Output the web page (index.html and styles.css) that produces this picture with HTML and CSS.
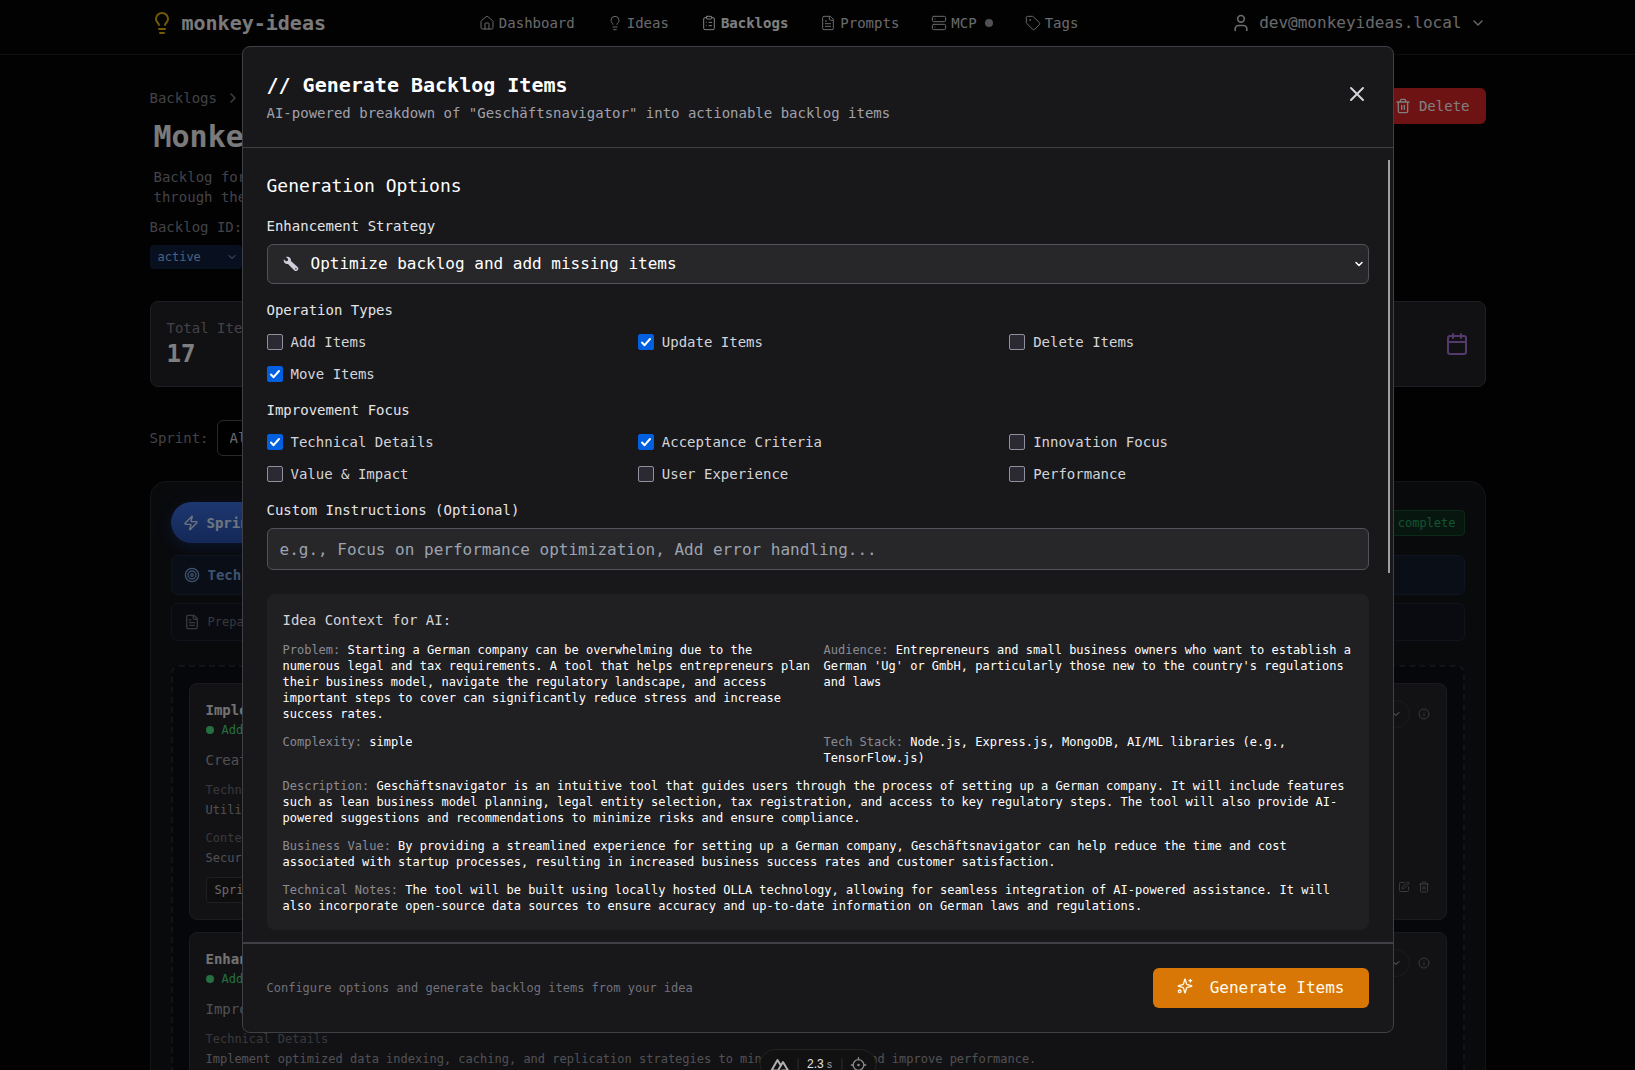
FILE: index.html
```html
<!DOCTYPE html>
<html lang="en">
<head>
    <meta charset="UTF-8">
    <meta name="viewport" content="width=device-width, initial-scale=1.0">
    <title>Backlogs - monkey-ideas</title>
    <link rel="stylesheet" href="styles.css">
</head>
<body>

<!-- icon set -->
<svg class="sprite" aria-hidden="true">
    <symbol id="i-bulb" viewBox="0 0 24 24"><path d="M15 14c.2-1 .7-1.700 1.500-2.500 1-.9 1.500-2.200 1.500-3.500A6 6 0 0 0 6 8c0 1 .2 2.200 1.500 3.500.7.7 1.300 1.500 1.500 2.500M9 18h6M10 22h4"/></symbol>
    <symbol id="i-home" viewBox="0 0 24 24"><path d="M15 21v-8a1 1 0 0 0-1-1h-4a1 1 0 0 0-1 1v8"/><path d="M3 10a2 2 0 0 1 .7-1.500l7-6a2 2 0 0 1 2.600 0l7 6A2 2 0 0 1 21 10v9a2 2 0 0 1-2 2H5a2 2 0 0 1-2-2z"/></symbol>
    <symbol id="i-clipboard" viewBox="0 0 24 24"><rect x="8" y="2" width="8" height="4" rx="1"/><path d="M16 4h2a2 2 0 0 1 2 2v14a2 2 0 0 1-2 2H6a2 2 0 0 1-2-2V6a2 2 0 0 1 2-2h2M12 11h4M12 16h4M8 11h.01M8 16h.01"/></symbol>
    <symbol id="i-file" viewBox="0 0 24 24"><path d="M15 2H6a2 2 0 0 0-2 2v16a2 2 0 0 0 2 2h12a2 2 0 0 0 2-2V7z"/><path d="M14 2v4a2 2 0 0 0 2 2h4M10 9H8M16 13H8M16 17H8"/></symbol>
    <symbol id="i-server" viewBox="0 0 24 24"><rect x="2" y="2" width="20" height="8" rx="2"/><rect x="2" y="14" width="20" height="8" rx="2"/><path d="M6 6h.01M6 18h.01"/></symbol>
    <symbol id="i-tag" viewBox="0 0 24 24"><path d="M12.600 2.600A2 2 0 0 0 11.200 2H4a2 2 0 0 0-2 2v7.200a2 2 0 0 0 .6 1.400l8.700 8.700a2.400 2.400 0 0 0 3.400 0l6.600-6.600a2.400 2.400 0 0 0 0-3.400z"/><circle cx="7.500" cy="7.500" r=".5"/></symbol>
    <symbol id="i-user" viewBox="0 0 24 24"><path d="M19 21v-2a4 4 0 0 0-4-4H9a4 4 0 0 0-4 4v2"/><circle cx="12" cy="7" r="4"/></symbol>
    <symbol id="i-down" viewBox="0 0 24 24"><path d="m6 9 6 6 6-6"/></symbol>
    <symbol id="i-right" viewBox="0 0 24 24"><path d="m9 18 6-6-6-6"/></symbol>
    <symbol id="i-close" viewBox="0 0 24 24"><path d="M18 6 6 18M6 6l12 12"/></symbol>
    <symbol id="i-trash" viewBox="0 0 24 24"><path d="M3 6h18M19 6v14a2 2 0 0 1-2 2H7a2 2 0 0 1-2-2V6M8 6V4a2 2 0 0 1 2-2h4a2 2 0 0 1 2 2v2M10 11v6M14 11v6"/></symbol>
    <symbol id="i-calendar" viewBox="0 0 24 24"><rect x="3" y="4" width="18" height="18" rx="2"/><path d="M8 2v4M16 2v4M3 10h18"/></symbol>
    <symbol id="i-zap" viewBox="0 0 24 24"><path d="M4 14a1 1 0 0 1-.8-1.600l9.900-10.200a.5.5 0 0 1 .9.500l-1.900 6A1 1 0 0 0 13 10h7a1 1 0 0 1 .8 1.600l-9.900 10.200a.5.5 0 0 1-.9-.5l1.900-6A1 1 0 0 0 11 14z"/></symbol>
    <symbol id="i-target" viewBox="0 0 24 24"><circle cx="12" cy="12" r="10"/><circle cx="12" cy="12" r="6"/><circle cx="12" cy="12" r="2"/></symbol>
    <symbol id="i-info" viewBox="0 0 24 24"><circle cx="12" cy="12" r="10"/><path d="M12 16v-4M12 8h.01"/></symbol>
    <symbol id="i-edit" viewBox="0 0 24 24"><path d="M12 3H5a2 2 0 0 0-2 2v14a2 2 0 0 0 2 2h14a2 2 0 0 0 2-2v-7"/><path d="M18.400 2.600a1 1 0 0 1 3 3l-9 9-4 1 1-4z"/></symbol>
    <symbol id="i-sparkles" viewBox="0 0 24 24"><path d="M9.900 15.500A2 2 0 0 0 8.500 14.100l-6.100-1.600a.5.5 0 0 1 0-1L8.500 9.900A2 2 0 0 0 9.900 8.500l1.600-6.100a.5.5 0 0 1 1 0l1.600 6.100a2 2 0 0 0 1.400 1.400l6.100 1.600a.5.5 0 0 1 0 1l-6.100 1.600a2 2 0 0 0-1.400 1.400l-1.600 6.100a.5.5 0 0 1-1 0z"/><path d="M20 2v4M22 4h-4"/><circle cx="4" cy="20" r="2"/></symbol>
</svg>

<header class="topbar">
    <div class="container topbar-inner">
        <a href="#" class="brand"><svg class="icon icon-lg"><use href="#i-bulb"/></svg>monkey-ideas</a>
        <nav class="main-nav">
            <a href="#"><svg class="icon"><use href="#i-home"/></svg>Dashboard</a>
            <a href="#"><svg class="icon"><use href="#i-bulb"/></svg>Ideas</a>
            <a href="#" class="current"><svg class="icon"><use href="#i-clipboard"/></svg>Backlogs</a>
            <a href="#"><svg class="icon"><use href="#i-file"/></svg>Prompts</a>
            <a href="#"><svg class="icon"><use href="#i-server"/></svg>MCP<span class="status-dot"></span></a>
            <a href="#"><svg class="icon"><use href="#i-tag"/></svg>Tags</a>
        </nav>
        <button class="user-menu"><svg class="icon icon-md"><use href="#i-user"/></svg>dev@monkeyideas.local<svg class="icon"><use href="#i-down"/></svg></button>
    </div>
</header>

<main class="container page">
    <div class="page-head">
        <div>
            <div class="breadcrumbs"><a href="#">Backlogs</a><svg class="icon"><use href="#i-right"/></svg></div>
            <h1>Monkey</h1>
            <p class="page-desc">Backlog for<br>through the</p>
            <p class="backlog-id">Backlog ID:</p>
            <div class="status-wrap">
                <select class="status-select" aria-label="Status"><option>active</option></select>
                <svg class="icon icon-sm"><use href="#i-down"/></svg>
            </div>
        </div>
        <button class="delete-btn"><svg class="icon"><use href="#i-trash"/></svg>Delete</button>
    </div>

    <div class="stats">
        <div class="stat-card">
            <div>
                <div class="stat-label">Total Items</div>
                <div class="stat-value">17</div>
            </div>
        </div>
        <div class="stat-card stat-last"><svg class="icon icon-lg calendar"><use href="#i-calendar"/></svg></div>
    </div>

    <div class="filter">
        <label for="sprint-filter">Sprint:</label>
        <select id="sprint-filter"><option>All</option></select>
    </div>

    <section class="sprint">
        <div class="sprint-head">
            <span class="sprint-pill"><svg class="icon"><use href="#i-zap"/></svg>Sprint</span>
            <span class="complete-badge">complete</span>
        </div>
        <div class="sprint-goal"><svg class="icon"><use href="#i-target"/></svg>Tech</div>
        <div class="sprint-note"><svg class="icon"><use href="#i-file"/></svg>Prepare</div>

        <div class="drop-area">
            <article class="item-card">
                <div class="item-head">
                    <div>
                        <h3>Implement</h3>
                        <div class="item-tag">Added</div>
                    </div>
                    <div class="item-tools">
                        <button class="round-btn" aria-label="Expand"><svg class="icon icon-sm"><use href="#i-down"/></svg></button>
                        <svg class="icon icon-sm"><use href="#i-info"/></svg>
                    </div>
                </div>
                <p class="item-text">Create</p>
                <div class="item-section">
                    <h4>Technical Details</h4>
                    <p>Utilize</p>
                </div>
                <div class="item-section">
                    <h4>Context</h4>
                    <p>Security</p>
                </div>
                <div class="item-foot">
                    <select class="item-select" aria-label="Sprint"><option>Sprint</option></select>
                    <div class="item-tools">
                        <button class="plain-btn" aria-label="Edit"><svg class="icon icon-sm"><use href="#i-edit"/></svg></button>
                        <button class="plain-btn" aria-label="Delete"><svg class="icon icon-sm"><use href="#i-trash"/></svg></button>
                    </div>
                </div>
            </article>

            <article class="item-card">
                <div class="item-head">
                    <div>
                        <h3>Enhance</h3>
                        <div class="item-tag">Added</div>
                    </div>
                    <div class="item-tools">
                        <button class="round-btn" aria-label="Expand"><svg class="icon icon-sm"><use href="#i-down"/></svg></button>
                        <svg class="icon icon-sm"><use href="#i-info"/></svg>
                    </div>
                </div>
                <p class="item-text">Improve</p>
                <div class="item-section">
                    <h4>Technical Details</h4>
                    <p>Implement optimized data indexing, caching, and replication strategies to minimize latency and improve performance.</p>
                </div>
            </article>
        </div>
    </section>
</main>

<div class="overlay">
    <div class="modal" role="dialog" aria-labelledby="modal-title">
        <div class="modal-header">
            <div>
                <h2 id="modal-title">// Generate Backlog Items</h2>
                <p>AI-powered breakdown of "Geschäftsnavigator" into actionable backlog items</p>
            </div>
            <button class="close-btn" aria-label="Close"><svg class="icon icon-lg"><use href="#i-close"/></svg></button>
        </div>

        <div class="modal-body">
            <div class="scroll-thumb"></div>
            <h3>Generation Options</h3>

            <div class="field">
                <label class="field-label" for="strategy">Enhancement Strategy</label>
                <div class="select-wrap">
                    <svg class="wrench" viewBox="0 0 16 16"><path d="M.8 3.200 2.900 5.300 4.700 4.900 5.100 3.100 3 1C5.800 0 8.400 2 7.900 4.900l6.700 6.200a2.300 2.300 0 0 1-3.200 3.300L5 7.900C2.400 8.500.1 6.200.8 3.200z"/><circle cx="12.900" cy="12.700" r=".8"/></svg>
                    <select id="strategy"><option>Optimize backlog and add missing items</option></select>
                    <svg class="icon icon-sm select-arrow"><use href="#i-down"/></svg>
                </div>
            </div>

            <fieldset class="field">
                <legend class="field-label">Operation Types</legend>
                <div class="checks">
                    <label><input type="checkbox">Add Items</label>
                    <label><input type="checkbox" checked>Update Items</label>
                    <label><input type="checkbox">Delete Items</label>
                    <label><input type="checkbox" checked>Move Items</label>
                </div>
            </fieldset>

            <fieldset class="field">
                <legend class="field-label">Improvement Focus</legend>
                <div class="checks">
                    <label><input type="checkbox" checked>Technical Details</label>
                    <label><input type="checkbox" checked>Acceptance Criteria</label>
                    <label><input type="checkbox">Innovation Focus</label>
                    <label><input type="checkbox">Value &amp; Impact</label>
                    <label><input type="checkbox">User Experience</label>
                    <label><input type="checkbox">Performance</label>
                </div>
            </fieldset>

            <div class="field">
                <label class="field-label" for="instructions">Custom Instructions (Optional)</label>
                <input type="text" id="instructions" placeholder="e.g., Focus on performance optimization, Add error handling...">
            </div>

            <div class="context">
                <h4>Idea Context for AI:</h4>
                <div class="context-grid">
                    <p><span>Problem:</span> Starting a German company can be overwhelming due to the numerous legal and tax requirements. A tool that helps entrepreneurs plan their business model, navigate the regulatory landscape, and access important steps to cover can significantly reduce stress and increase success rates.</p>
                    <p><span>Audience:</span> Entrepreneurs and small business owners who want to establish a German 'Ug' or GmbH, particularly those new to the country's regulations and laws</p>
                    <p><span>Complexity:</span> simple</p>
                    <p><span>Tech Stack:</span> Node.js, Express.js, MongoDB, AI/ML libraries (e.g., TensorFlow.js)</p>
                    <p class="wide"><span>Description:</span> Geschäftsnavigator is an intuitive tool that guides users through the process of setting up a German company. It will include features such as lean business model planning, legal entity selection, tax registration, and access to key regulatory steps. The tool will also provide AI-powered suggestions and recommendations to minimize risks and ensure compliance.</p>
                    <p class="wide"><span>Business Value:</span> By providing a streamlined experience for setting up a German company, Geschäftsnavigator can help reduce the time and cost associated with startup processes, resulting in increased business success rates and customer satisfaction.</p>
                    <p class="wide"><span>Technical Notes:</span> The tool will be built using locally hosted OLLA technology, allowing for seamless integration of AI-powered assistance. It will also incorporate open-source data sources to ensure accuracy and up-to-date information on German laws and regulations.</p>
                </div>
            </div>
        </div>

        <div class="modal-footer">
            <p>Configure options and generate backlog items from your idea</p>
            <button class="generate-btn"><svg class="icon"><use href="#i-sparkles"/></svg>Generate Items</button>
        </div>
    </div>
</div>

<div class="devtools">
    <svg class="nuxt" viewBox="0 0 20 14"><path d="M10 12.500H2L8 2l3 5M8.500 12.500 13.500 4l5 8.500H12"/></svg>
    <span class="timing">2.3 <small>s</small></span>
    <svg class="icon" viewBox="0 0 24 24"><circle cx="12" cy="12" r="8"/><circle cx="12" cy="12" r="1"/><path d="M12 1v3M12 20v3M1 12h3M20 12h3"/></svg>
</div>

</body>
</html>
```
FILE: styles.css
```css
* {
    box-sizing: border-box;
    margin: 0;
    padding: 0;
}

body {
    font-family: "DejaVu Sans Mono", "Liberation Mono", monospace;
    font-size: 14px;
    line-height: 20px;
    background: #040405;
    color: #fff;
    height: 100vh;
    overflow: hidden;
}

button, select, input {
    font: inherit;
    color: inherit;
}

button {
    background: none;
    border: none;
    cursor: pointer;
}

select {
    appearance: none;
}

a {
    color: inherit;
    text-decoration: none;
}

.sprite {
    display: none;
}

.icon {
    width: 16px;
    height: 16px;
    flex: none;
    fill: none;
    stroke: currentColor;
    stroke-width: 2;
    stroke-linecap: round;
    stroke-linejoin: round;
}

.icon-sm {
    width: 12px;
    height: 12px;
}

.icon-md {
    width: 20px;
    height: 20px;
}

.icon-lg {
    width: 24px;
    height: 24px;
}

.container {
    max-width: 1400px;
    margin: 0 auto;
    padding: 0 32px;
}

/* top bar */
.topbar {
    border-bottom: 1px solid #1c1c1f;
    padding-bottom: 8px;
}

.topbar-inner {
    display: flex;
    justify-content: space-between;
    align-items: center;
    height: 46px;
}

.brand {
    display: flex;
    align-items: center;
    gap: 8px;
    font-size: 20px;
    font-weight: bold;
    color: #f4f4f5;
}

.brand .icon {
    color: #eab308;
}

.main-nav {
    display: flex;
    gap: 32px;
    color: #d4d4d8;
}

.main-nav a {
    display: flex;
    align-items: center;
    gap: 4px;
}

.main-nav .icon {
    stroke-width: 1.5;
}

.main-nav .current {
    color: #fff;
    font-weight: bold;
}

.status-dot {
    width: 8px;
    height: 8px;
    margin-left: 4px;
    border-radius: 50%;
    background: #a1a1aa;
}

.user-menu {
    display: flex;
    align-items: center;
    gap: 8px;
    font-size: 16px;
    color: #d4d4d8;
}

.user-menu .icon {
    stroke-width: 2;
}

/* page */
.page {
    padding-top: 33px;
}

.page-head {
    display: flex;
    justify-content: space-between;
    align-items: flex-start;
    margin-bottom: 32px;
}

.breadcrumbs {
    display: flex;
    align-items: center;
    gap: 8px;
    margin-bottom: 11px;
    color: #85858e;
}

h1 {
    font-size: 30px;
    line-height: 36px;
    padding-left: 4px;
    margin-bottom: 12px;
    color: #f4f4f5;
}

.page-desc {
    padding-left: 4px;
    margin-bottom: 10px;
    color: #85858e;
}

.backlog-id {
    margin-bottom: 8px;
    color: #85858e;
}

.status-wrap {
    position: relative;
    width: 92px;
}

.status-wrap .icon {
    position: absolute;
    right: 4px;
    top: 6px;
    color: #93c5fd;
}

.status-select {
    width: 100%;
    height: 24px;
    padding: 0 8px;
    border: none;
    border-radius: 4px;
    background: #101f3c;
    color: #93c5fd;
    font-size: 12px;
}

.delete-btn {
    display: flex;
    align-items: center;
    gap: 8px;
    height: 36px;
    padding: 0 16px;
    border-radius: 6px;
    background: #dc2626;
}

.stats {
    display: grid;
    grid-template-columns: repeat(4, 1fr);
    gap: 16px;
    margin-bottom: 33px;
}

.stat-card {
    display: flex;
    align-items: center;
    padding: 16px;
    border: 1px solid #3f3f46;
    border-radius: 8px;
    background: #232326;
}

.stat-last {
    grid-column: 4;
    justify-content: flex-end;
}

.stat-label {
    color: #85858e;
}

.stat-value {
    font-size: 24px;
    line-height: 32px;
    font-weight: bold;
}

.calendar {
    color: #a874d8;
}

.filter {
    display: flex;
    align-items: center;
    gap: 8px;
    margin-bottom: 25px;
    color: #85858e;
}

.filter select {
    width: 160px;
    height: 36px;
    padding: 0 12px;
    border: 1px solid #52525b;
    border-radius: 6px;
    background: #000;
    color: #d4d4d8;
}

/* sprint board */
.sprint {
    padding: 20px;
    border: 1px solid #2a2a31;
    border-radius: 16px;
    background: #121419;
}

.sprint-head {
    display: flex;
    justify-content: space-between;
    align-items: center;
    margin-bottom: 12px;
}

.sprint-pill {
    display: flex;
    align-items: center;
    gap: 8px;
    width: 160px;
    height: 41px;
    padding: 0 12px;
    border-radius: 21px;
    background: linear-gradient(#3b6fe0, #2850b0);
    box-shadow: 0 4px 14px rgba(37, 99, 235, 0.3);
    color: #dbeafe;
    font-weight: bold;
}

.complete-badge {
    padding: 2px 8px;
    border: 1px solid #14532d;
    border-radius: 4px;
    background: #0f2f20;
    color: #26a464;
    font-size: 12px;
}

.sprint-goal, .sprint-note {
    display: flex;
    align-items: center;
    gap: 8px;
    padding: 0 12px;
    border: 1px solid #1c2840;
    border-radius: 6px;
}

.sprint-goal {
    height: 40px;
    margin-bottom: 8px;
    background: #141c2c;
    color: #7ba5dd;
    font-weight: bold;
}

.sprint-note {
    height: 38px;
    margin-bottom: 24px;
    border-color: #202634;
    background: #121722;
    color: #71717a;
    font-size: 12px;
}

.drop-area {
    display: flex;
    flex-direction: column;
    gap: 12px;
    padding: 16px;
    border: 2px dashed #24262e;
    border-radius: 8px;
    background: #0c0e14;
}

.item-card {
    padding: 16px;
    border: 1px solid #36363c;
    border-radius: 8px;
    background: #252528;
}

.item-head, .item-foot {
    display: flex;
    justify-content: space-between;
    align-items: flex-start;
}

.item-head h3 {
    font-size: 14px;
    color: #e4e4e7;
}

.item-tag {
    display: flex;
    align-items: center;
    gap: 8px;
    font-size: 12px;
    color: #4ade80;
}

.item-tag::before {
    content: "";
    width: 8px;
    height: 8px;
    border-radius: 50%;
    background: #4ade80;
}

.item-tools {
    display: flex;
    align-items: center;
    gap: 8px;
    color: #71717a;
}

.round-btn {
    display: flex;
    align-items: center;
    justify-content: center;
    width: 28px;
    height: 28px;
    border: 1px solid #36363c;
    border-radius: 50%;
    color: #d4d4d8;
}

.plain-btn {
    display: flex;
}

.item-text {
    margin: 10px 0;
    color: #a1a1aa;
}

.item-section {
    margin-bottom: 8px;
    font-size: 12px;
    color: #a1a1aa;
}

.item-section h4 {
    font-weight: normal;
    color: #71717a;
}

.item-foot {
    padding-top: 1px;
}

.item-foot .item-tools {
    padding-top: 4px;
}

.item-select {
    width: 120px;
    height: 26px;
    padding: 0 8px;
    border: 1px solid #3f3f46;
    border-radius: 4px;
    background: #1c1c1f;
    color: #d4d4d8;
    font-size: 12px;
}

/* modal */
.overlay {
    position: fixed;
    inset: 0;
    display: flex;
    justify-content: center;
    align-items: flex-start;
    padding: 46px 16px 0;
    background: rgba(0, 0, 0, 0.5);
}

.modal {
    width: 100%;
    max-width: 1152px;
    border: 1px solid #3f3f46;
    border-radius: 8px;
    background: #18181b;
}

.modal-header {
    display: flex;
    justify-content: space-between;
    align-items: center;
    padding: 24px;
    border-bottom: 1px solid #3f3f46;
}

.modal-header h2 {
    font-size: 20px;
    line-height: 28px;
    margin-bottom: 4px;
}

.modal-header p {
    color: #a1a1aa;
}

.close-btn {
    display: flex;
    padding-bottom: 6px;
    color: #d4d4d8;
}

.modal-body {
    position: relative;
    padding: 24px 24px 12px;
}

.scroll-thumb {
    position: absolute;
    top: 12px;
    right: 3px;
    width: 2px;
    height: 52%;
    background: #9f9fa2;
}

.modal-body h3 {
    font-size: 18px;
    line-height: 28px;
    font-weight: normal;
    margin-bottom: 16px;
}

.field {
    border: none;
    margin-bottom: 16px;
}

.field-label {
    display: block;
    margin-bottom: 8px;
    color: #e4e4e7;
}

legend.field-label {
    margin-bottom: 12px;
}

.select-wrap {
    position: relative;
}

.select-wrap select {
    width: 100%;
    height: 40px;
    padding: 0 43px;
    border: 1px solid #52525b;
    border-radius: 6px;
    background: #27272a;
    font-size: 16px;
    display: block;
}

.wrench {
    position: absolute;
    left: 16px;
    top: 12px;
    width: 16px;
    height: 16px;
    fill: #cfcfda;
}

.wrench circle {
    fill: #27272a;
}

.select-arrow {
    position: absolute;
    right: 4px;
    top: 14px;
    stroke-width: 3;
}

.checks {
    display: grid;
    grid-template-columns: repeat(3, 1fr);
    gap: 12px;
}

.checks label {
    display: flex;
    align-items: center;
    gap: 8px;
    color: #d4d4d8;
}

.checks input {
    appearance: none;
    width: 16px;
    height: 16px;
    border: 1px solid #8f8f9d;
    border-radius: 2px;
    background: #2b2a33;
}

.checks input:checked {
    border-color: #0060df;
    background: #0060df url("data:image/svg+xml,%3Csvg xmlns='http://www.w3.org/2000/svg' viewBox='0 0 14 14'%3E%3Cpath d='M3 7.500l2.600 2.700L11 4' fill='none' stroke='white' stroke-width='2' stroke-linecap='round' stroke-linejoin='round'/%3E%3C/svg%3E");
}

.field input[type="text"] {
    display: block;
    width: 100%;
    height: 42px;
    padding: 0 12px;
    border: 1px solid #52525b;
    border-radius: 6px;
    background: #27272a;
    font-size: 16px;
}

.field input::placeholder {
    color: #9ca3af;
}

.context {
    margin-top: 24px;
    padding: 16px;
    border-radius: 8px;
    background: #202023;
}

.context h4 {
    font-size: 14px;
    font-weight: normal;
    margin-bottom: 12px;
    color: #d4d4d8;
}

.context-grid {
    display: grid;
    grid-template-columns: 1fr 1fr;
    gap: 12px;
    font-size: 12px;
    line-height: 16px;
}

.context-grid span {
    color: #8b8b94;
}

.wide {
    grid-column: span 2;
}

.modal-footer {
    display: flex;
    justify-content: space-between;
    align-items: center;
    padding: 24px;
    border-top: 2px solid #3f3f46;
}

.modal-footer p {
    font-size: 12px;
    color: #71717a;
}

.generate-btn {
    display: flex;
    align-items: center;
    gap: 17px;
    height: 40px;
    padding: 0 24px;
    border-radius: 6px;
    background: #d97706;
    color: #fffbeb;
    font-size: 16px;
}

.generate-btn .icon {
    margin-bottom: 4px;
}

/* devtools pill */
.devtools {
    position: fixed;
    left: 50%;
    bottom: -10px;
    transform: translateX(-50%);
    display: flex;
    align-items: center;
    gap: 8px;
    height: 31px;
    padding: 0 9px;
    border: 1px solid #232325;
    border-radius: 16px;
    background: #111112;
    color: #8a8a8a;
}

.nuxt {
    width: 20px;
    height: 14px;
    fill: none;
    stroke: #b0b0b0;
    stroke-width: 2;
    stroke-linejoin: round;
}

.timing {
    padding: 0 9px;
    border: solid #2c2c2e;
    border-width: 0 1px;
    font: 12px/12px "Liberation Sans", Arial, sans-serif;
    color: #e4e4e7;
}

.timing small {
    font-size: 10px;
    color: #a1a1aa;
}
```
